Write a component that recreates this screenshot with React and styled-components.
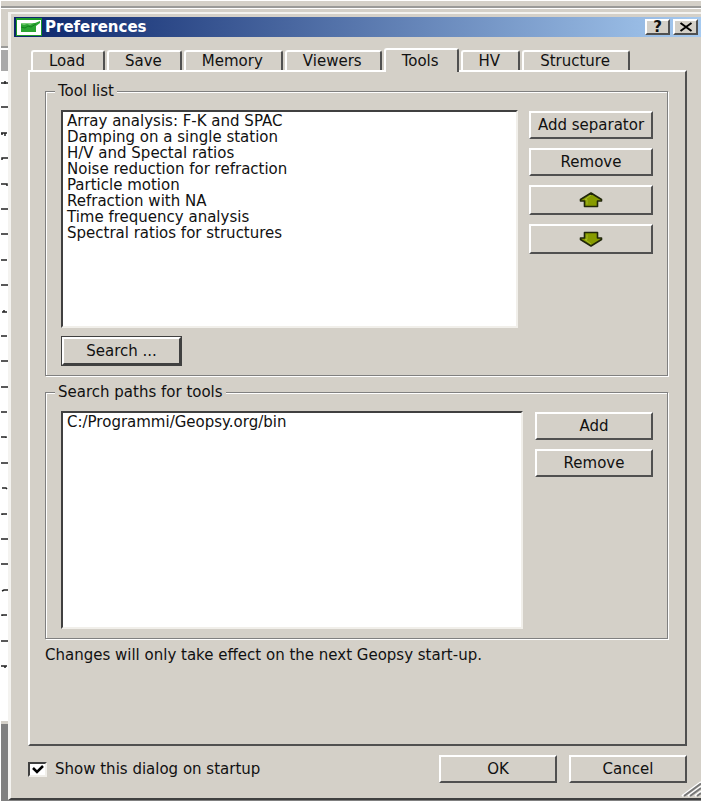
import { useState } from 'react'
import styled, { createGlobalStyle, css } from 'styled-components'

const face = '#d4d0c8'
const dark = '#404040'
const shadow = '#808080'

const GlobalStyle = createGlobalStyle`
  * {
    box-sizing: border-box;
  }

  body {
    margin: 0;
    background: #fff;
    color: #111;
    font: 15px/16px 'DejaVu Sans', Verdana, sans-serif;
  }

  button,
  input {
    font: inherit;
    color: inherit;
  }
`

const Desktop = styled.div`
  display: flex;
  flex-direction: column;
  min-height: 100vh;
  padding: 1px;
  overflow: hidden;
`

const MenuStrip = styled.div`
  height: 11px;
  background: ${face};
  border-bottom: 3px solid ${face};
  box-shadow: inset 0 -1px #fff, inset 0 -3px #9a9a98;
`

const Workspace = styled.div`
  display: flex;
  flex: 1;
  background: ${shadow};
`

const Backdrop = styled.div`
  display: flex;
  flex-direction: column;
  width: 7px;
`

const Toolbar = styled.div`
  height: 38px;
  background: ${face};
  border-bottom: 2px solid #fff;
  box-shadow: inset 0 -2px #9a9a98;
`

const Ruler = styled.div`
  height: 21px;
  background: #a9a9a9;
`

const Sheet = styled.div`
  display: flex;
  flex-direction: column;
  flex: 1;
  justify-content: space-between;
  padding: 10px 0 52px;
  margin-bottom: 77px;
  background: #fff;
  border-bottom: 3px solid ${face};

  svg {
    display: block;
  }
`

const Dialog = styled.main`
  display: flex;
  flex-direction: column;
  flex: 1;
  min-width: 0;
  margin-bottom: 1px;
  padding: 3px 0 15px 3px;
  background: ${face};
  border-top: 2px solid #f4f3f0;
  border-left: 3px solid #f4f3f0;
  border-bottom: 2px solid ${dark};
  position: relative;
`

const TitleBar = styled.header`
  display: flex;
  align-items: center;
  gap: 3px;
  height: 20px;
  padding: 0 3px 0 2px;
  background: linear-gradient(to right, #0a246a, #a6caf0);
`

const Title = styled.h1`
  flex: 1;
  margin: 0;
  color: #fff;
  font-size: 15px;
  line-height: 18px;
`

const bevel = css`
  background: ${face};
  border: 2px solid;
  border-color: #fff #505050 #505050 #fff;
  border-radius: 0;
`

const CaptionButton = styled.button`
  ${bevel}
  display: grid;
  place-items: center;
  width: 25px;
  height: 16px;
  padding: 0;
  font-weight: bold;
  line-height: 12px;
`

const Body = styled.div`
  display: flex;
  flex-direction: column;
  flex: 1;
  padding: 11px 14px 0;
`

const TabList = styled.div`
  display: flex;
  align-items: flex-end;
  gap: 2px;
  padding-left: 3px;
`

const Tab = styled.button`
  height: ${p => (p.$active ? 24 : 20)}px;
  margin-bottom: ${p => (p.$active ? -2 : 0)}px;
  padding: 0 18px 0 16px;
  background: ${face};
  border: 2px solid;
  border-color: #fff #505050 ${face} #fff;
  border-bottom: 0;
  border-radius: 3px 3px 0 0;
  position: relative;
`

const Panel = styled.section`
  display: flex;
  flex-direction: column;
  flex: 1;
  gap: 8px;
  padding: 11px 17px 11px 15px;
  border: 2px solid;
  border-color: #fff #505050 #505050 #fff;
`

const Group = styled.fieldset`
  display: flex;
  flex-direction: column;
  gap: 8px;
  min-width: 0;
  margin: 0;
  padding: 11px 14px 9px 15px;
  border: 1px solid ${shadow};
  box-shadow: 1px 1px #fff, inset 1px 1px #fff;
`

const Legend = styled.legend`
  margin-left: -6px;
  padding: 0 3px;
  background: ${face};
`

const GroupRow = styled.div`
  display: flex;
  gap: ${p => p.$gap}px;
`

const ListBox = styled.ul`
  flex: 1;
  min-height: 218px;
  margin: 0;
  padding: 1px 4px;
  list-style: none;
  background: #fff;
  border: 2px solid;
  border-color: ${dark} #f1efea #f1efea ${dark};
`

const ButtonColumn = styled.div`
  display: flex;
  flex-direction: column;
  gap: 9px;
  width: ${p => p.$width}px;
  padding-top: 1px;
`

const Button = styled.button`
  ${bevel}
  display: grid;
  place-items: center;
  height: ${p => (p.$tall ? 30 : 28)}px;
  padding: 0;
  white-space: nowrap;
`

const DefaultButton = styled(Button)`
  align-self: flex-start;
  width: 121px;
  height: 30px;
  outline: 1px solid ${dark};
  outline-offset: -1px;
  border-width: 3px;
  border-color: #fff ${dark} ${dark} #fff;
`

const Note = styled.p`
  margin: 0;
`

const Footer = styled.footer`
  display: flex;
  align-items: center;
  gap: 12px;
  padding-top: 9px;
`

const CheckLabel = styled.label`
  display: flex;
  align-items: center;
  gap: 8px;
  flex: 1;
`

const CheckBox = styled.span`
  display: grid;

  input,
  svg {
    grid-area: 1 / 1;
    width: 19px;
    height: 15px;
  }

  input {
    appearance: none;
    margin: 0;
    background: #fff;
    border: 2px solid;
    border-color: ${dark} #f1efea #f1efea ${dark};
  }

  svg {
    pointer-events: none;
  }

  input:not(:checked) + svg {
    visibility: hidden;
  }
`

const FooterButton = styled(Button)`
  width: 118px;
`

const Grip = styled.svg`
  position: absolute;
  right: 0;
  bottom: 1px;
`

const marks = [
  'M0 2h7M4 0v3', 'M0 1h7', 'M0 1h6M4 1v3M1 1v2', 'M1 3V1h6', 'M0 1h6v2', 'M0 1h7',
  'M0 1h7', 'M0 1h6', 'M0 1h7', 'M1 2h5M3 0v2', 'M0 1h6', 'M0 1h7',
  'M0 1h7', 'M0 1h6', 'M0 1h5v1', 'M0 1h7', 'M1 1h4l1 1', 'M1 2V1h5',
  'M0 1h7', 'M0 1h7', 'M1 2l2-1h4', 'M1 2V1h5', 'M0 1h7', 'M0 1h6M4 1v2',
]

const tabs = ['Load', 'Save', 'Memory', 'Viewers', 'Tools', 'HV', 'Structure']

const tools = [
  'Array analysis: F-K and SPAC',
  'Damping on a single station',
  'H/V and Spectal ratios',
  'Noise reduction for refraction',
  'Particle motion',
  'Refraction with NA',
  'Time frequency analysis',
  'Spectral ratios for structures',
]

const AppIcon = () => (
  <svg width='26' height='18' viewBox='0 0 26 18' aria-hidden='true'>
    <rect width='26' height='18' fill='#1c9a28' />
    <rect x='1' y='2' width='24' height='15' fill='#fff' />
    <path d='M5 5h14l5-2v2l-4 3v6H5z' fill='#2ba532' />
    <path d='M5 5h13l-4 2-3-1-3 1-3-1z' fill='#7ccb78' />
    <path d='M5 9l4 1 3-2 3 1 5-3' fill='none' stroke='#12801d' />
  </svg>
)

const Arrow = ({ down }) => (
  <svg width='24' height='18' viewBox='0 0 24 18' aria-hidden='true'>
    <g transform={down ? 'matrix(1 0 0 -1 0 18)' : undefined}>
      <path
        d='M12 2L1.500 8.500v1.500h4v5.500h13v-5.500h4v-1.500z'
        fill='#879b00'
        stroke='#20260a'
        strokeWidth='1.600'
        strokeLinejoin='round'
      />
      <path d='M12 4L6 8.500h2v5' fill='none' stroke='#a5b926' />
    </g>
  </svg>
)

const App = () => {
  const [tab, setTab] = useState('Tools')

  return (
    <>
      <GlobalStyle />
      <Desktop>
        <MenuStrip />
        <Workspace>
          <Backdrop aria-hidden='true'>
            <Toolbar />
            <Ruler />
            <Sheet>
              {marks.map((d, i) => (
                <svg key={i} width='7' height='4' viewBox='0 0 7 4'>
                  <path d={d} fill='none' stroke='#222' strokeWidth='1.500' />
                </svg>
              ))}
            </Sheet>
          </Backdrop>
          <Dialog>
            <TitleBar>
              <AppIcon />
              <Title>Preferences</Title>
              <CaptionButton type='button'>?</CaptionButton>
              <CaptionButton type='button' aria-label='Close'>
                <svg width='14' height='10' viewBox='0 0 14 10'>
                  <path d='M1.500 1l11 8M12.500 1l-11 8' stroke='#000' strokeWidth='2' />
                </svg>
              </CaptionButton>
            </TitleBar>
            <Body>
              <TabList role='tablist'>
                {tabs.map(name => (
                  <Tab
                    key={name}
                    type='button'
                    role='tab'
                    aria-selected={name === tab}
                    $active={name === tab}
                    onClick={() => setTab(name)}
                  >
                    {name}
                  </Tab>
                ))}
              </TabList>
              <Panel>
                <Group>
                  <Legend>Tool list</Legend>
                  <GroupRow $gap={11}>
                    <ListBox>
                      {tools.map(tool => (
                        <li key={tool}>{tool}</li>
                      ))}
                    </ListBox>
                    <ButtonColumn $width={124}>
                      <Button type='button'>Add separator</Button>
                      <Button type='button'>Remove</Button>
                      <Button type='button' $tall aria-label='Move up'>
                        <Arrow />
                      </Button>
                      <Button type='button' $tall aria-label='Move down'>
                        <Arrow down />
                      </Button>
                    </ButtonColumn>
                  </GroupRow>
                  <DefaultButton type='button'>Search ...</DefaultButton>
                </Group>
                <Group>
                  <Legend>Search paths for tools</Legend>
                  <GroupRow $gap={12}>
                    <ListBox>
                      <li>C:/Programmi/Geopsy.org/bin</li>
                    </ListBox>
                    <ButtonColumn $width={118}>
                      <Button type='button'>Add</Button>
                      <Button type='button'>Remove</Button>
                    </ButtonColumn>
                  </GroupRow>
                </Group>
                <Note>Changes will only take effect on the next Geopsy start-up.</Note>
              </Panel>
              <Footer>
                <CheckLabel>
                  <CheckBox>
                    <input type='checkbox' defaultChecked />
                    <svg viewBox='0 0 19 15' aria-hidden='true'>
                      <path d='M5 6l4 4 6-6' fill='none' stroke='#000' strokeWidth='2.500' />
                    </svg>
                  </CheckBox>
                  Show this dialog on startup
                </CheckLabel>
                <FooterButton type='button'>OK</FooterButton>
                <FooterButton type='button'>Cancel</FooterButton>
              </Footer>
            </Body>
            <Grip width='20' height='16' viewBox='0 0 20 16' aria-hidden='true'>
              <path d='M1 15L20 1M7 15L20 5.500M14 15l6-4.500' stroke='#fff' strokeWidth='2' />
              <path d='M3 15L20 2.500M9 15l11-8M16 15l4-3' stroke='#777' strokeWidth='2' />
            </Grip>
          </Dialog>
        </Workspace>
      </Desktop>
    </>
  )
}

export default App
